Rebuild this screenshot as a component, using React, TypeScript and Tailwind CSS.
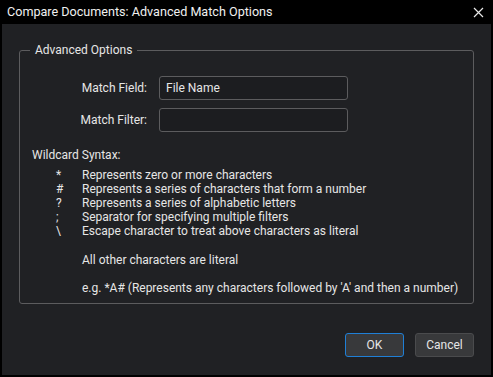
const ROWS: [string, string][] = [
  ['*', 'Represents zero or more characters'],
  ['#', 'Represents a series of characters that form a number'],
  ['?', 'Represents a series of alphabetic letters'],
  [';', 'Separator for specifying multiple filters'],
  ['\\', 'Escape character to treat above characters as literal'],
]

export default function App() {
  return (
    <div className="w-[493px] h-[377px] bg-black flex flex-col text-[12px] text-[#e6e6e6] font-['Roboto',sans-serif]">
      <div className="h-[24px] flex items-center justify-between pl-[7px] pr-[9px] text-[12.6px] text-[#f0f0f0]">
        <span>Compare Documents: Advanced Match Options</span>
        <svg width="11" height="11" viewBox="0 0 11 11" stroke="#e8e8e8" strokeWidth="1.2">
          <path d="M1 1L10 10M10 1L1 10" />
        </svg>
      </div>
      <div className="flex-1 mx-[2px] mb-[2px] bg-[#202124] flex flex-col px-[17px] pt-[26px]">
        <div className="relative h-[254px] border border-[#5c5c5e] rounded-[3px]">
          <span className="absolute left-[10px] -top-[9px] px-[5px] bg-[#202124] leading-[16px]">
            Advanced Options
          </span>
          <div className="grid grid-cols-[127px_189px] gap-x-[12px] gap-y-[8px] items-center mt-[25px]">
            <span className="text-right">Match Field:</span>
            <div className="h-[24px] border border-[#5c5c5e] rounded-[3px] bg-[#1c1d20] px-[6px] flex items-center">
              File Name
            </div>
            <span className="text-right">Match Filter:</span>
            <div className="h-[24px] border border-[#5c5c5e] rounded-[3px] bg-[#1c1d20]" />
          </div>
          <div className="ml-[12px] mt-[16px] leading-[14px]">
            <div>Wildcard Syntax:</div>
            <div className="mt-[6px] pl-[24px]">
              {ROWS.map(([sym, text]) => (
                <div key={text} className="flex">
                  <span className="w-[26px]">{sym}</span>
                  <span>{text}</span>
                </div>
              ))}
            </div>
            <div className="pl-[50px] mt-[15px]">All other characters are literal</div>
            <div className="pl-[50px] mt-[14px]">
              e.g. *A# (Represents any characters followed by 'A' and then a number)
            </div>
          </div>
        </div>
        <div className="flex justify-end gap-[11px] mt-[29px]">
          <button className="w-[59px] h-[24px] rounded-[3px] bg-[#38393b] border border-[#1f7fd6] text-[#e6e6e6]">
            OK
          </button>
          <button className="w-[59px] h-[24px] rounded-[3px] bg-[#38393b] border border-[#4a4b4d] text-[#e6e6e6]">
            Cancel
          </button>
        </div>
      </div>
    </div>
  )
}
